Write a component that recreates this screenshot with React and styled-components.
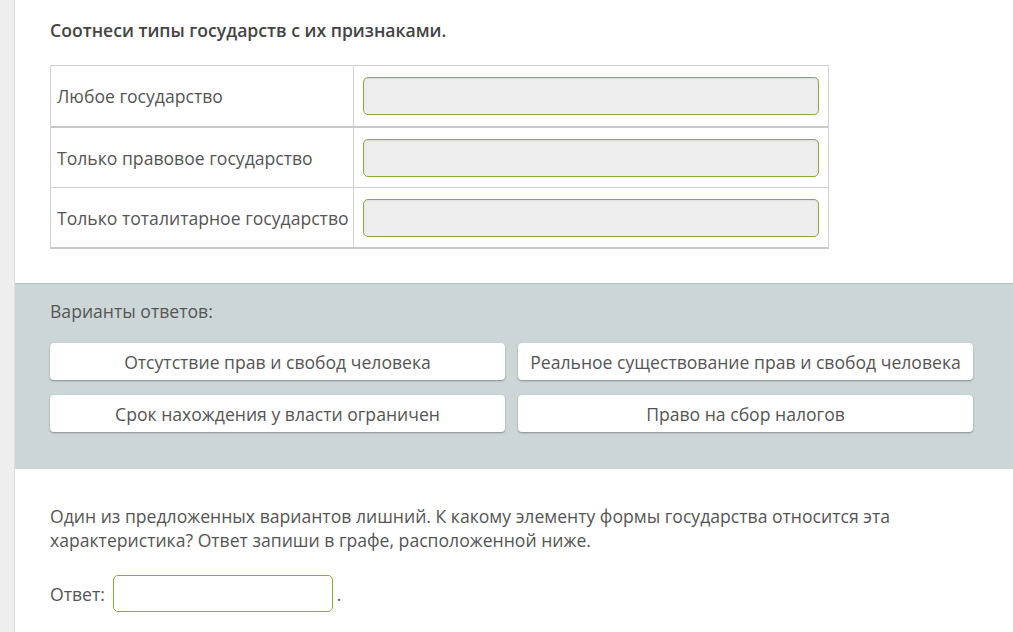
import React from "react";
import styled, { createGlobalStyle } from "styled-components";

const GlobalStyle = createGlobalStyle`
    html, body {
        margin: 0;
        padding: 0;
        background: #fff;
    }
    body {
        font-family: "Open Sans", "Liberation Sans", sans-serif;
        color: #555;
    }
`;

const Page = styled.div`
    display: flex;
    min-height: 632px;
`;

const SideStrip = styled.div`
    width: 14px;
    flex-shrink: 0;
    background: #eeeeee;
    border-right: 1px solid #dedede;
`;

const Main = styled.div`
    flex: 1;
    display: flex;
    flex-direction: column;
`;

const Block = styled.div`
    padding: ${(p) => p.$pad};
`;

const Title = styled.div`
    font-size: 17.6px;
    font-weight: 600;
    color: #444;
    line-height: 24px;
    margin-bottom: 23px;
`;

const Table = styled.div`
    width: 779px;
    border: 1px solid #d2d2d2;
    border-bottom: 2px solid #c8c8c8;
    box-sizing: border-box;
`;

const Row = styled.div`
    display: grid;
    grid-template-columns: 303px 1fr;
    height: ${(p) => (p.$first ? "60px" : "59px")};
    border-top: ${(p) => p.$border};
`;

const Label = styled.div`
    display: flex;
    align-items: center;
    padding-left: 6px;
    font-size: 17.6px;
    color: #555;
    border-right: 1px solid #d2d2d2;
    white-space: nowrap;
`;

const Cell = styled.div`
    display: flex;
    align-items: center;
    padding: 0 9px;
`;

const DropSlot = styled.div`
    flex: 1;
    height: 38px;
    box-sizing: border-box;
    background: #eeeeee;
    border: 1px solid #8aab3c;
    border-radius: 5px;
    box-shadow: inset 0 1px 2px rgba(0, 0, 0, 0.08);
`;

const Options = styled.div`
    background: #cdd6d7;
    border-top: 1px solid #b9c4c5;
    padding: 15px 40px 37px 35px;
`;

const OptionsLabel = styled.div`
    font-size: 17.6px;
    line-height: 24px;
    color: #555;
    margin-bottom: 20px;
`;

const OptionsGrid = styled.div`
    display: grid;
    grid-template-columns: 455px 455px;
    column-gap: 13px;
    row-gap: 15px;
`;

const Chip = styled.div`
    height: 37px;
    box-sizing: border-box;
    background: #fff;
    border-radius: 4px;
    box-shadow: 0 1px 2px rgba(0, 0, 0, 0.35);
    display: flex;
    align-items: center;
    justify-content: center;
    font-size: 17.6px;
    color: #555;
    white-space: nowrap;
`;

const Question = styled.div`
    font-size: 17.6px;
    line-height: 24px;
    color: #555;
    max-width: 900px;
    margin-bottom: 23px;
`;

const AnswerLine = styled.div`
    display: flex;
    align-items: center;
    font-size: 17.6px;
    color: #555;
`;

const AnswerInput = styled.div`
    width: 220px;
    height: 37px;
    box-sizing: border-box;
    margin: 0 4px 0 8px;
    border: 1px solid #8aab3c;
    border-radius: 5px;
    background: #fff;
`;

const rows = [
    { text: "Любое государство", border: "none" },
    { text: "Только правовое государство", border: "2px solid #c8c8c8" },
    { text: "Только тоталитарное государство", border: "1px solid #d2d2d2" },
];

const options = [
    "Отсутствие прав и свобод человека",
    "Реальное существование прав и свобод человека",
    "Срок нахождения у власти ограничен",
    "Право на сбор налогов",
];

export default function App() {
    return (
        <>
            <GlobalStyle />
            <Page>
                <SideStrip />
                <Main>
                    <Block $pad="18px 0 34px 35px">
                        <Title>Соотнеси типы государств с их признаками.</Title>
                        <Table>
                            {rows.map((r, i) => (
                                <Row key={r.text} $first={i === 0} $border={r.border}>
                                    <Label>{r.text}</Label>
                                    <Cell>
                                        <DropSlot />
                                    </Cell>
                                </Row>
                            ))}
                        </Table>
                    </Block>
                    <Options>
                        <OptionsLabel>Варианты ответов:</OptionsLabel>
                        <OptionsGrid>
                            {options.map((o) => (
                                <Chip key={o}>{o}</Chip>
                            ))}
                        </OptionsGrid>
                    </Options>
                    <Block $pad="35px 0 0 35px">
                        <Question>
                            Один из предложенных вариантов лишний. К какому элементу формы
                            государства относится эта характеристика? Ответ запиши в графе,
                            расположенной ниже.
                        </Question>
                        <AnswerLine>
                            Ответ:
                            <AnswerInput />.
                        </AnswerLine>
                    </Block>
                </Main>
            </Page>
        </>
    );
}
